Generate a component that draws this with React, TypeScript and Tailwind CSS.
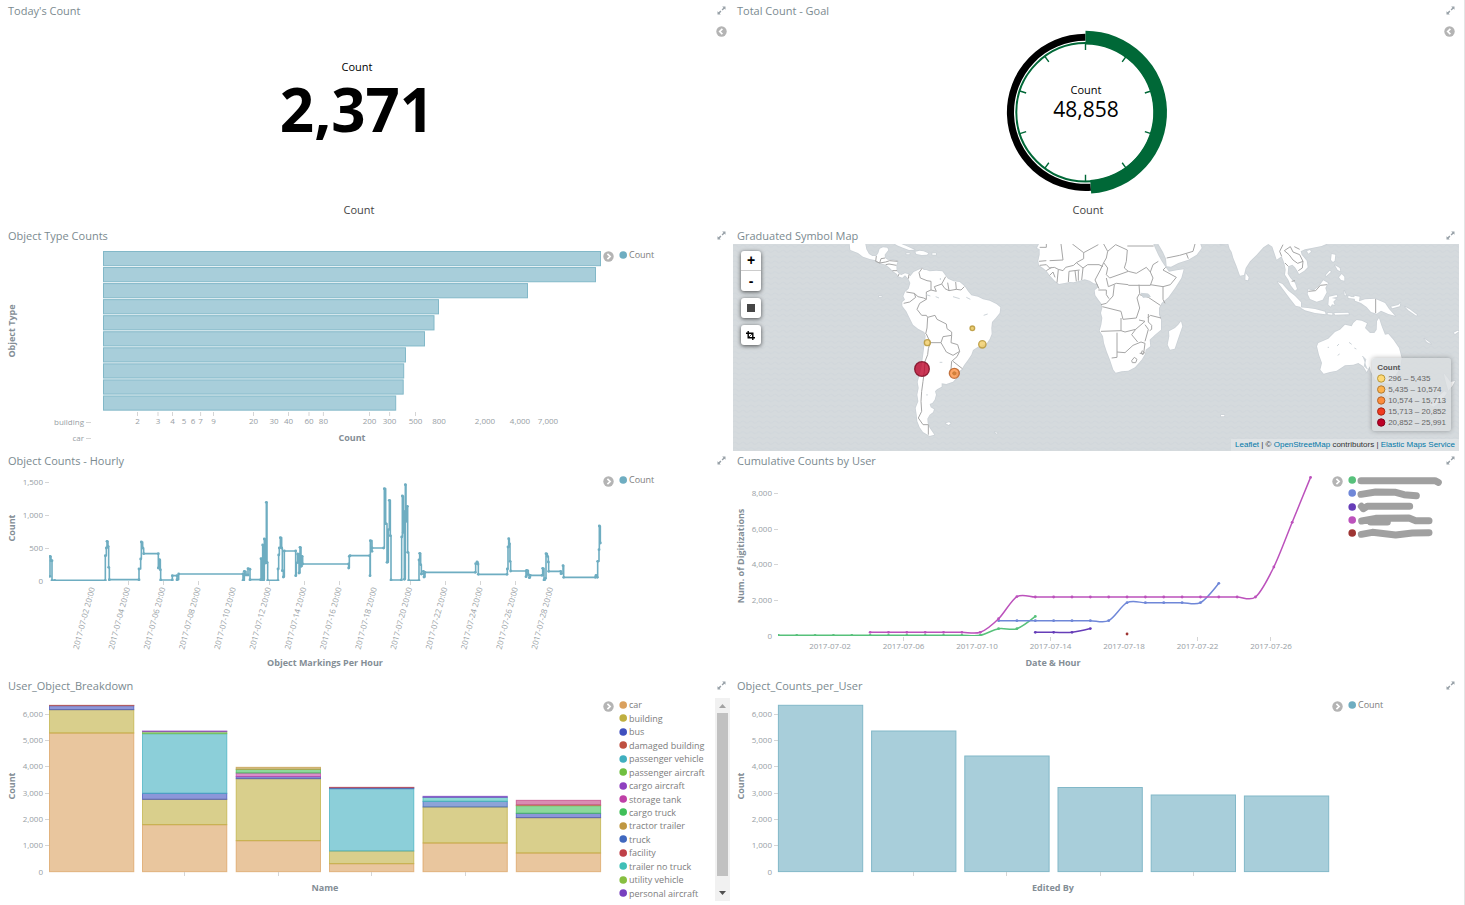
import React from 'react';

type Pt = [number, number];

const BLUE = '#6eadc1';

/* ---------- shared pieces ---------- */

function ExpandIcon() {
  return (
    <svg viewBox="0 0 9 9" className="h-[9px] w-[9px]" aria-hidden="true">
      <path d="M5.2 0.5H8.5V3.8L7.4 2.7L5.6 4.5L4.6 3.5L6.4 1.7ZM0.5 5.2L1.6 6.3L3.4 4.5L4.4 5.5L2.7 7.4L3.8 8.5H0.5Z" fill="#98a1a8" />
    </svg>
  );
}

function ToggleButton({ dir }: { dir: 'left' | 'right' }) {
  return (
    <button type="button" aria-label="Toggle legend" className="mt-[6px] flex h-3 w-[11px] shrink-0 items-center justify-center">
      <svg viewBox="0 0 11 11" className="h-[11px] w-[11px]" aria-hidden="true">
        <circle cx="5.5" cy="5.5" r="5.2" fill="#b4b4b4" />
        <path
          d={dir === 'right' ? 'M4.4 2.8L7.1 5.5L4.4 8.2' : 'M6.4 2.8L3.7 5.5L6.4 8.2'}
          fill="none"
          stroke="#fff"
          strokeWidth="1.7"
        />
      </svg>
    </button>
  );
}

function Panel({ title, children }: { title: string; children: React.ReactNode }) {
  return (
    <section className="flex min-w-0 flex-col">
      <header className="flex h-[15px] items-start justify-between pl-1 pr-1">
        <h2 className="text-[11px] leading-[13px] text-[#7b8a90]">{title}</h2>
        <button type="button" aria-label={'Expand ' + title} className="flex h-[13px] items-center">
          <ExpandIcon />
        </button>
      </header>
      <div className="flex flex-1">{children}</div>
    </section>
  );
}

function Dot({ color }: { color: string }) {
  return (
    <svg viewBox="0 0 8 8" className="h-2 w-2 shrink-0" aria-hidden="true">
      <circle cx="4.2" cy="4" r="3.8" fill={color} />
    </svg>
  );
}

function Legend({ children }: { children: React.ReactNode }) {
  return (
    <div className="flex w-[127px] shrink-0">
      <ToggleButton dir="right" />
      <ul className="ml-[5px] mt-1 min-w-0 flex-1 text-[9px] leading-[13px] text-[#7d7d7d]">{children}</ul>
    </div>
  );
}

function CountLegend() {
  return (
    <Legend>
      <li className="flex items-center gap-[2px]">
        <Dot color={BLUE} />
        Count
      </li>
    </Legend>
  );
}

function Chart({ x, y, label, children }: { x: number; y: number; label: string; children: React.ReactNode }) {
  return (
    <div className="min-w-0 flex-1">
      <svg viewBox={`${x} ${y} 599 207`} className="block h-auto w-full" role="img" aria-label={label}>
        {children}
      </svg>
    </div>
  );
}

function AxisTitle({ x, y, vertical, children }: { x: number; y: number; vertical?: boolean; children: string }) {
  return (
    <text
      x={x}
      y={y}
      textAnchor="middle"
      fill="#848e96"
      className="text-[9px] font-bold"
      transform={vertical ? `rotate(-90 ${x} ${y})` : undefined}
    >
      {children}
    </text>
  );
}

function YTicks({ right, ticks }: { right: number; ticks: [string, number][] }) {
  return (
    <g>
      {ticks.map(([label, y]) => (
        <g key={label}>
          <text x={right - 6} y={Math.floor(y) + 3} textAnchor="end" fill="#979ea4" className="text-[8px]">
            {label}
          </text>
          {label !== '0' && <path d={`M${right - 4} ${y}H${right}`} stroke="#d5d5d5" />}
        </g>
      ))}
    </g>
  );
}

function XMarks({ xs, y }: { xs: number[]; y: number }) {
  return <path d={xs.map((x) => `M${x} ${y}v4`).join('')} stroke="#d5d5d5" fill="none" />;
}

/* ---------- Today's Count ---------- */

function TodayCount() {
  return (
    <>
      <div className="flex flex-1 flex-col items-center pr-[2px]">
        <div className="flex flex-1 flex-col items-center pr-1 pt-10 text-black">
          <div className="text-[11px] leading-4">Count</div>
          <div className="text-[60px] font-bold leading-[68px]">2,371</div>
        </div>
        <div className="pb-2 text-[11px] leading-4 text-[#444]">Count</div>
      </div>
      <div className="w-[14px] shrink-0">
        <ToggleButton dir="left" />
      </div>
    </>
  );
}

/* ---------- Goal gauge ---------- */

const GX = 1085.5;
const GY = 112.3;

function polar(r: number, deg: number): Pt {
  const a = (deg * Math.PI) / 180;
  return [GX + r * Math.sin(a), GY - r * Math.cos(a)];
}

function ring(inner: number, outer: number, from: number, to: number) {
  const big = to - from > 180 ? 1 : 0;
  return `M${polar(outer, from)}A${outer} ${outer} 0 ${big} 1 ${polar(outer, to)}L${polar(inner, to)}A${inner} ${inner} 0 ${big} 0 ${polar(inner, from)}Z`;
}

function Goal() {
  return (
    <>
      <div className="min-w-0 flex-1">
        <svg viewBox="733 19 711 207" className="block h-auto w-full" role="img" aria-label="Total count against goal">
          <path d={ring(71.5, 78.6, 176, 360)} fill="#000" />
          <circle cx={GX} cy={GY} r="69.2" fill="none" stroke="#006837" strokeWidth="2" />
          <path d={ring(67.8, 81.5, 0, 176)} fill="#006837" />
          <path
            d={Array.from({ length: 10 }, (_, i) => `M${polar(69, i * 36)}L${polar(62.4, i * 36)}`).join('')}
            stroke="#006837"
            strokeWidth="1.4"
          />
          <text x="1086" y="94" textAnchor="middle" className="text-[11px]">Count</text>
          <text x="1086" y="117" textAnchor="middle" className="text-[21px]">48,858</text>
          <text x="1088" y="214" textAnchor="middle" fill="#444" className="text-[11px]">Count</text>
        </svg>
      </div>
      <div className="w-[15px] shrink-0">
        <ToggleButton dir="left" />
      </div>
    </>
  );
}

/* ---------- Object Type Counts ---------- */

const typeEnds = [600.5, 595.5, 527.5, 438.5, 434, 424.5, 405.5, 403.7, 403.2, 395.7];
const logLabels: [string, number, boolean][] = [
  ['2', 137.5, true], ['3', 158, true], ['4', 172.5, true], ['5', 184, false], ['6', 193, false],
  ['7', 200.6, true], ['9', 213.5, true], ['20', 253.5, true], ['30', 274, false], ['40', 288.5, true],
  ['60', 309, true], ['80', 323.4, true], ['200', 369.5, true], ['300', 389.6, true], ['500', 415.5, true],
  ['800', 439, false], ['2,000', 485, false], ['4,000', 520, false], ['7,000', 548, false],
];

function ObjectTypes() {
  return (
    <>
      <Chart x={4} y={244} label="Object type counts">
        {typeEnds.map((end, i) => (
          <rect
            key={i}
            x="103.5"
            y={251.5 + i * 16.05}
            width={end - 103.5}
            height="14.2"
            fill={BLUE}
            fillOpacity="0.6"
            stroke="#82b8c8"
          />
        ))}
        {logLabels.map(([t, x]) => (
          <text key={t} x={x} y="424" textAnchor="middle" fill="#979ea4" className="text-[8px]">{t}</text>
        ))}
        <XMarks xs={logLabels.filter((l) => l[2]).map((l) => l[1])} y={412} />
        <text x="84" y="425" textAnchor="end" fill="#979ea4" className="text-[8px]">building</text>
        <text x="84" y="441" textAnchor="end" fill="#979ea4" className="text-[8px]">car</text>
        <path d="M86 422.5H91M86 438.5H91" stroke="#d5d5d5" />
        <AxisTitle x={15} y={331} vertical>Object Type</AxisTitle>
        <AxisTitle x={352} y={441}>Count</AxisTitle>
      </Chart>
      <CountLegend />
    </>
  );
}

/* ---------- Map ---------- */

const land = [
  'M350 48L352 66L375 75L390 86L410 93L428 97L440 105L458 110L468 118L480 130L492 138L495 145L508 149L516 142L526 152L532 146L528 139L516 136L505 141L498 138L491 128L490 112L494 100L480 96L464 95L456 90L455 80L466 66L463 59L450 58L440 62L436 75L430 84L418 84L408 78L400 64L397 48Z',
  'M486 48L505 48L520 54L538 62L545 65L528 66L510 59L492 52Z',
  'M547 71L560 68L572 70L586 76L582 80L566 81L550 78Z',
  'M598 76h11v4h-11ZM520 76h10v3h-10Z',
  'M526 152L533 143L542 132L555 126L568 120L572 126L580 126L590 130L610 128L628 130L634 138L645 152L662 160L680 162L695 175L705 190L715 202L735 206L750 214L770 218L790 228L802 238L800 255L788 270L777 282L775 300L776 318L770 333L762 345L750 352L735 356L720 366L715 380L705 395L694 410L686 424L676 432L664 432L672 448L660 461L640 468L626 466L626 476L612 484L606 490L609 500L605 515L598 525L590 528L593 538L603 544L600 553L590 560L583 572L584 585L590 600L604 620L590 624L570 612L560 598L553 580L551 560L548 540L556 520L553 500L557 480L554 462L560 440L565 420L568 400L572 370L575 345L578 325L574 312L555 302L540 290L530 270L520 250L508 234L508 222L516 215L511 205L516 192L527 182L532 165Z',
  'M638 586l10 -3l5 3l-6 5ZM785 612l9 3l-3 2Z',
  'M918 48L912 60L920 64L920 80L916 98L918 112L930 120L940 128L950 142L965 158L978 168L995 165L1010 162L1022 163L1040 158L1055 154L1070 158L1082 166L1094 168L1096 178L1085 187L1087 202L1097 216L1106 228L1108 240L1104 255L1108 270L1105 290L1100 308L1110 325L1113 345L1121 370L1131 395L1141 425L1148 434L1166 430L1186 428L1206 418L1226 395L1236 378L1238 365L1252 355L1250 335L1266 320L1284 305L1284 275L1278 260L1278 240L1286 225L1306 208L1326 180L1345 150L1352 124L1331 127L1308 131L1298 118L1286 100L1276 82L1266 60L1261 48Z',
  'M1276 48L1290 72L1299 92L1301 115L1314 116L1336 105L1366 95L1391 80L1406 60L1402 48Z',
  'M1344 280L1348 295L1341 315L1334 335L1325 362L1311 365L1304 350L1309 325L1308 310L1326 300L1336 290Z',
  'M1462 50L1486 48L1490 62L1496 72L1501 90L1511 115L1521 143L1533 141L1538 120L1551 100L1571 80L1591 58L1606 48H1480Z',
  'M1538 136L1547 148L1545 157L1537 155Z',
  'M1606 48L1618 56L1631 95L1646 85L1654 105L1658 125L1656 140L1666 155L1673 172L1686 188L1692 183L1686 165L1672 150L1664 137L1666 115L1678 110L1686 118L1694 130L1698 138L1714 128L1724 118L1721 98L1706 80L1703 70L1716 64L1736 60L1766 54L1780 48Z',
  'M1722 69l9 -3l3 5l-8 6Z',
  'M1634 162L1648 168L1666 188L1686 204L1704 223L1704 237L1688 233L1668 208L1652 186Z',
  'M1701 238L1724 240L1746 243L1776 251L1778 259L1746 255L1716 247ZM1784 255l14 1v4l-14 -1ZM1804 255l42 -1l2 5l-42 1Z',
  'M1726 184L1741 188L1758 175L1771 157L1785 165L1777 180L1781 193L1769 215L1751 221L1731 213L1724 198Z',
  'M1788 206L1811 201L1813 206L1796 210L1809 213L1801 221L1805 231L1797 229L1793 236L1786 230Z',
  'M1796 78L1807 80L1805 98L1800 102L1794 96ZM1806 112l14 8l2 10l-8 -4ZM1818 148l8 -10l8 8v12l-10 -2ZM1790 128l-12 14l2 2l14 -13ZM1846 203l10 4l14 1l-6 4l-18 -2ZM1834 188l5 14h-4Z',
  'M1864 203L1880 206L1878 220L1896 214L1926 212L1956 225L1968 243L1986 263L1966 258L1944 248L1931 257L1914 252L1901 237L1884 225L1866 218ZM1974 236l22 -5l6 -6l-2 10l-22 6ZM2016 236l14 8l22 16l-2 3l-24 -16ZM2074 332l14 10l6 6l-12 -6ZM2162 314l12 -6l4 2l-12 8Z',
  'M1756 345L1752 355L1758 380L1767 405L1762 425L1772 437L1791 432L1811 428L1836 412L1861 410L1876 405L1891 415L1901 432L1910 415L1913 430L1926 455L1946 464L1971 468L1986 445L2001 420L2006 390L1998 360L1981 335L1966 318L1956 320L1946 295L1938 270L1932 280L1931 305L1924 315L1911 315L1896 300L1902 286L1886 278L1871 276L1861 285L1856 295L1836 290L1821 305L1806 312L1786 332Z',
  'M1956 485L1971 488L1966 506L1958 502Z',
  'M2132 436L2142 448L2152 462L2166 459L2158 474L2146 488L2140 468ZM2134 490L2142 494L2124 520L2102 536L2090 530L2114 508Z',
  'M1464 561h10v4h-10ZM438 204h8v2h-8Z',
];

const borders = [
  'M430 84L428 100L440 105L444 92L456 90M440 105L458 102L470 98L494 100M458 110L468 108L490 112M478 128H492M495 145L498 138M528 139L526 152',
  'M568 120L558 134L562 150L582 158L594 160L594 186L580 192L580 214L572 210L555 206L544 196L520 192M512 226L530 222L548 208L544 196M580 214L560 226L552 244L566 262L580 262L584 268L582 300L578 318M584 268L606 262L612 274L640 288L642 302L656 312L656 322L630 326L624 344L592 344L580 318M592 344L586 362L584 380L576 400L574 430L570 460L566 490L564 520L566 550L556 570L570 590L586 590V620M594 186L610 190L604 176L626 168L638 146M626 168L636 182L648 188L644 164M648 188L670 184L668 162M670 184L684 186L694 176M656 322L654 344L674 350L680 370L660 382L640 372L624 344M680 370L672 386L656 400L654 424M660 400L688 422',
  'M920 58H940V48M984 48L990 96L950 98M940 98L918 100M1018 48L1052 74L1096 50M1052 74V92L1030 104L1022 112L998 118L990 128L976 124L964 118L950 120L940 110L920 112M1030 104L1050 120L1064 110H1098L1110 116M976 124L972 164M1008 130L1006 162M1026 128L1030 160M1036 128V158M1050 120L1046 156M950 142L960 132L966 148M1008 130L1040 126M940 128L956 118',
  'M1112 48L1124 70L1120 90L1112 104L1102 126L1086 156M1124 70L1148 50L1183 66L1180 100L1174 120L1186 130L1130 150L1120 140L1124 120L1112 104M1120 150L1126 176L1150 166L1186 170M1183 54H1262M1186 130L1210 136L1240 118L1252 132L1260 150L1252 172H1186M1276 100L1260 110L1252 132M1298 118L1290 126L1330 148L1312 170L1290 176L1252 170M1290 176V214L1296 226M1218 170L1220 196L1212 210L1220 240L1210 270L1170 274L1164 250L1140 244L1108 236M1220 200L1246 208L1282 232M1144 170L1140 204L1120 226L1104 230M1096 186H1120V200L1128 212M1086 156L1098 182M1164 270V308L1104 310M1164 308L1176 312L1208 304L1236 280L1218 276M1244 270L1252 262L1284 270M1152 314V388L1136 390M1152 372L1176 374L1200 352L1224 342L1236 346L1232 376L1220 376M1208 304L1196 320L1214 342M1236 290L1246 304L1236 340M1196 398l8 -10l8 6l-4 10h-10ZM1228 368l6 6l-4 6l-6 -4ZM1246 258v24l10 10v12l-6 4',
  'M1301 90L1340 82L1360 76L1380 70L1386 48M1360 76L1366 92M1646 85L1640 70L1650 50M1654 68L1672 56L1680 72L1700 80L1710 100L1694 106L1680 96L1668 80L1654 68M1666 115L1656 105M1710 100L1708 120L1696 128M1700 64L1684 56M1676 160L1686 158M1726 190L1748 188L1762 172L1782 170M1928 213V255',
];

const markers = [
  { x: 567, y: 423, r: 22, fill: '#bd0026', stroke: '#7f0d24' },
  { x: 664, y: 436, r: 15, fill: '#fd8d3c', stroke: '#b9622a' },
  { x: 583, y: 344, r: 9, fill: '#f0cb62', stroke: '#b9983a' },
  { x: 748, y: 349, r: 11, fill: '#f0cb62', stroke: '#b9983a' },
  { x: 718, y: 301, r: 7, fill: '#e5c050', stroke: '#b9983a' },
];

const ranges = [
  ['296 – 5,435', '#fed976', '#b9983a'],
  ['5,435 – 10,574', '#feb24c', '#b27d35'],
  ['10,574 – 15,713', '#fd8d3c', '#b1632a'],
  ['15,713 – 20,852', '#f03b20', '#a82916'],
  ['20,852 – 25,991', '#bd0026', '#84001b'],
];

function SymbolMap() {
  return (
    <div className="relative flex-1 overflow-hidden bg-[#d5dadd] font-['Liberation_Sans',sans-serif]">
      <svg viewBox="0 48 2178 621" className="block h-auto w-full" role="img" aria-label="World map with graduated symbols">
        <defs>
          <pattern id="waves" width="24" height="16" patternUnits="userSpaceOnUse">
            <path d="M0 6Q6 0 12 6T24 6" fill="none" stroke="#cdd4d9" strokeWidth="3" opacity="0.45" />
          </pattern>
        </defs>
        <rect x="0" y="48" width="2178" height="621" fill="url(#waves)" />
        <path d={land.join('')} fill="#fff" stroke="#cbd1d6" strokeWidth="5" strokeLinejoin="round" />
        <path d={land.join('')} fill="#fff" />
        <path d={borders.join('')} fill="none" stroke="#a6a6a6" strokeWidth="3" strokeLinejoin="round" />
        <path
          d="M1224 196l22 2l6 8l-22 2ZM580 200l12 4M608 206l10 4M660 206l20 6M700 208l12 6M752 262l12 -4M620 403h8M622 150v6M582 498v5M1812 354l6 -6M1848 343l8 6M1814 382l6 -4M1784 358h4M1888 384l10 10l-4 20l10 10M1864 360l6 3"
          fill="#cdd4d9"
          stroke="#cdd4d9"
          strokeWidth="3"
        />
        {markers.map((m) => (
          <circle key={m.x} cx={m.x} cy={m.y} r={m.r} fill={m.fill} fillOpacity="0.78" stroke={m.stroke} strokeWidth="4" strokeOpacity="0.85" />
        ))}
        <circle cx="664" cy="436" r="5" fill="#d98036" stroke="#b9773a" strokeWidth="2" />
      </svg>

      <div className="absolute left-2 top-[7px] flex flex-col gap-[7px] text-black">
        <div className="flex flex-col overflow-hidden rounded-[3px] bg-white shadow-[0_1px_4px_rgba(0,0,0,0.65)]">
          <button type="button" aria-label="Zoom in" className="flex h-5 w-5 items-center justify-center border-b border-[#ccc] pb-px text-sm font-bold leading-none">+</button>
          <button type="button" aria-label="Zoom out" className="flex h-5 w-5 items-center justify-center pb-px text-sm font-bold leading-none">-</button>
        </div>
        <button type="button" aria-label="Draw rectangle" className="flex h-5 w-5 items-center justify-center rounded-[3px] bg-white shadow-[0_1px_4px_rgba(0,0,0,0.65)]">
          <svg viewBox="0 0 8 8" className="h-2 w-2" aria-hidden="true"><rect width="8" height="8" fill="#464646" /></svg>
        </button>
        <button type="button" aria-label="Fit data bounds" className="flex h-5 w-5 items-center justify-center rounded-[3px] bg-white pr-px shadow-[0_1px_4px_rgba(0,0,0,0.65)]">
          <svg viewBox="0 0 9 9" className="h-[9px] w-[9px]" aria-hidden="true">
            <path d="M2.2 0V6.7H9M0 2.2H6.8V9" fill="none" stroke="#000" strokeWidth="1.4" />
            <path d="M3 6L6.4 2.6" stroke="#000" strokeWidth="0.7" />
          </svg>
        </button>
      </div>

      <div className="absolute bottom-5 right-2 rounded-[3px] bg-[#dadde0]/80 px-[5px] pb-[3px] pt-1 text-[8px] leading-[11px] text-[#666] shadow-[0_0_5px_rgba(0,0,0,0.3)]">
        <div className="font-bold text-[#555]">Count</div>
        <ul>
          {ranges.map(([label, fill, stroke]) => (
            <li key={label} className="flex items-center gap-[2px] whitespace-nowrap">
              <svg viewBox="0 0 9 9" className="h-[9px] w-[9px] shrink-0" aria-hidden="true">
                <circle cx="4.2" cy="4.5" r="3.7" fill={fill} stroke={stroke} />
              </svg>
              {label}
            </li>
          ))}
        </ul>
      </div>

      <div className="absolute bottom-0 right-0 bg-white/25 px-1 text-[8px] leading-[12px] text-[#333]">
        <a href="#leaflet" className="text-[#0078a8]">Leaflet</a> | © <a href="#osm" className="text-[#0078a8]">OpenStreetMap</a> contributors |{' '}
        <a href="#ems" className="text-[#0078a8]">Elastic Maps Service</a>
      </div>
    </div>
  );
}

/* ---------- Object Counts - Hourly ---------- */

/* Samples on a grid three times finer than the drawing unit. */
const hourly: Pt[] = [
  [150, 370], [150, 310], [153, 323], [156, 323], [156, 382], [164, 382], [316, 382], [316, 308], [319, 285], [321, 265], [324, 280],
  [326, 343], [328, 380], [417, 380], [417, 348], [422, 318], [424, 267], [428, 285], [431, 302], [475, 302], [475, 345],
  [478, 320], [481, 350], [482, 381], [517, 381], [517, 368], [531, 368], [531, 380], [536, 363], [729, 363], [729, 382],
  [733, 355], [738, 366], [744, 366], [744, 347], [750, 349], [750, 380], [782, 380], [783, 317], [787, 380], [788, 276],
  [791, 380], [793, 258], [797, 330], [799, 148], [801, 328], [803, 382], [834, 382], [834, 348], [836, 306], [838, 285], [841, 254],
  [845, 285], [847, 353], [850, 372], [853, 294], [887, 294], [887, 368], [889, 330], [893, 303], [897, 360], [900, 283],
  [903, 340], [906, 310], [908, 333], [1046, 333], [1046, 345], [1048, 310], [1050, 308], [1109, 308], [1110, 368], [1111, 263],
  [1116, 295], [1116, 285], [1151, 285], [1153, 107], [1157, 212], [1161, 328], [1165, 230], [1168, 142], [1171, 248],
  [1173, 381], [1204, 381], [1205, 252], [1207, 129], [1210, 238], [1211, 175], [1213, 379], [1216, 95], [1218, 205],
  [1222, 160], [1223, 298], [1226, 382], [1257, 382], [1257, 321], [1259, 301], [1262, 335], [1264, 363], [1270, 355],
  [1272, 372], [1275, 358], [1426, 358], [1427, 332], [1431, 327], [1434, 333], [1435, 364], [1521, 364], [1522, 348],
  [1524, 282], [1526, 257], [1528, 272], [1530, 325], [1532, 354], [1579, 354], [1578, 371], [1580, 352], [1585, 365],
  [1588, 374], [1591, 367], [1626, 367], [1628, 346], [1632, 381], [1636, 376], [1638, 302], [1642, 310], [1645, 327],
  [1646, 355], [1682, 355], [1683, 362], [1689, 338], [1691, 373], [1786, 373], [1788, 367], [1792, 373], [1793, 325],
  [1797, 290], [1798, 219], [1801, 270],
].map(([x, y]) => [x / 3, 453 + y / 3] as Pt);

/* Each value holds until the next sample, then jumps. */
const hourlyPath = hourly.map(([x, y], i) => (i === 0 ? `M${x} ${y}` : `H${x}V${y}`)).join('');

const hourDays = ['02', '04', '06', '08', '10', '12', '14', '16', '18', '20', '22', '24', '26', '28'];

function Hourly() {
  return (
    <>
      <Chart x={4} y={469} label="Object counts per hour">
        <clipPath id="hourly-plot">
          <rect x="49" y="470" width="553" height="111" />
        </clipPath>
        <YTicks right={49} ticks={[['1,500', 482.5], ['1,000', 515.5], ['500', 548.5], ['0', 581.5]]} />
        <XMarks xs={[128.5, 163.5, 198.5, 269.5, 304.5, 339.5, 410.5, 445.5, 480.5, 515.5]} y={581} />
        <g clipPath="url(#hourly-plot)">
          <path d={hourlyPath} fill="none" stroke={BLUE} strokeWidth="1.6" strokeLinejoin="round" />
          {hourly.map(([x, y], i) => (
            <circle key={i} cx={x} cy={y} r="1.4" fill={BLUE} />
          ))}
        </g>
        {hourDays.map((d, i) => {
          const x = 95 + i * 35.25;
          return (
            <text key={d} x={x} y="588" textAnchor="end" fill="#979ea4" className="text-[8px]" transform={`rotate(-75 ${x} 588)`}>
              {`2017-07-${d} 20:00`}
            </text>
          );
        })}
        <AxisTitle x={15} y={528} vertical>Count</AxisTitle>
        <AxisTitle x={325} y={666}>Object Markings Per Hour</AxisTitle>
      </Chart>
      <CountLegend />
    </>
  );
}

/* ---------- Cumulative Counts by User ---------- */

const day = (i: number) => 778.4 + i * 18.35;
const flat = (from: number, to: number, y: number): Pt[] =>
  Array.from({ length: to - from + 1 }, (_, k) => [day(from + k), y] as Pt);

const users: { color: string; pts: Pt[]; scribble: string }[] = [
  {
    color: '#57c17b',
    pts: [...flat(0, 11, 635.3), [day(12), 628.7], [day(13), 628.7], [day(14), 616.4]],
    scribble: 'M12 23H234L244 28',
  },
  {
    color: '#6f87d8',
    pts: [...flat(12, 18, 620.7), ...flat(19, 23, 602.7), [day(24), 583.3]],
    scribble: 'M12 22L56 15L116 16L141 23L178 26',
  },
  { color: '#663db8', pts: [...flat(14, 16, 632.3), [day(17), 628.6]], scribble: 'M13 19L19 26L31 19H158' },
  {
    color: '#bc52bc',
    pts: [...flat(5, 11, 632.3), [day(12), 618.7], [day(13), 596.6], ...flat(14, 26, 597), [day(27), 567], [day(28), 522.3], [day(29), 477.4]],
    scribble: 'M14 24L56 16L156 15L176 23H216M41 27H91',
  },
  { color: '#9e3533', pts: [[day(19), 634]], scribble: 'M13 22L46 16L116 24L166 18L216 17' },
];

/* Cardinal spline with a tension of 0.7. */
function spline(pts: Pt[]) {
  const tangent = (i: number): Pt =>
    i === 0 || i === pts.length - 1
      ? [0, 0]
      : [0.15 * (pts[i + 1][0] - pts[i - 1][0]), 0.15 * (pts[i + 1][1] - pts[i - 1][1])];
  let d = `M${pts[0]}`;
  for (let i = 1; i < pts.length; i++) {
    const a = tangent(i - 1);
    const b = tangent(i);
    d += `C${pts[i - 1][0] + a[0]} ${pts[i - 1][1] + a[1]} ${pts[i][0] - b[0]} ${pts[i][1] - b[1]} ${pts[i]}`;
  }
  return d;
}

function Cumulative() {
  return (
    <>
      <Chart x={733} y={469} label="Cumulative counts by user">
        <clipPath id="cumulative-plot">
          <rect x="778" y="470" width="554" height="166" />
        </clipPath>
        <YTicks right={778} ticks={[['8,000', 493.5], ['6,000', 529.5], ['4,000', 564.5], ['2,000', 600.5], ['0', 636.5]]} />
        <XMarks xs={[903.5, 1050.5, 1197.5, 1270.5]} y={637} />
        {['02', '06', '10', '14', '18', '22', '26'].map((d, i) => (
          <text key={d} x={830 + i * 73.5} y="649" textAnchor="middle" fill="#979ea4" className="text-[8px]">
            {`2017-07-${d}`}
          </text>
        ))}
        <g clipPath="url(#cumulative-plot)">
          {users.map((u) => (
            <g key={u.color}>
              <path d={spline(u.pts)} fill="none" stroke={u.color} strokeWidth="1.5" />
              {u.pts.map(([x, y]) => (
                <circle key={x} cx={x} cy={y} r="1.4" fill={u.color} />
              ))}
            </g>
          ))}
        </g>
        <AxisTitle x={744} y={556} vertical>Num. of Digitizations</AxisTitle>
        <AxisTitle x={1053} y={666}>Date &amp; Hour</AxisTitle>
      </Chart>
      <Legend>
        <div className="flex h-[67px] flex-col">
          {users.map((u) => (
            <li key={u.color} className="flex flex-1 items-center gap-px">
              <Dot color={u.color} />
              <svg viewBox="0 0 264 39" className="h-[13px] w-[88px]" aria-hidden="true">
                <path d={u.scribble} fill="none" stroke="#a0a0a0" strokeWidth="21" strokeLinecap="round" strokeLinejoin="round" />
              </svg>
            </li>
          ))}
        </div>
      </Legend>
    </>
  );
}

/* ---------- User_Object_Breakdown ---------- */

const kinds: [string, string][] = [
  ['car', '#daa05d'],
  ['building', '#bfaf40'],
  ['bus', '#4050bf'],
  ['damaged building', '#bf5040'],
  ['passenger vehicle', '#40afbf'],
  ['passenger aircraft', '#70bf40'],
  ['cargo aircraft', '#8f40bf'],
  ['storage tank', '#bf40a7'],
  ['cargo truck', '#40bf58'],
  ['tractor trailer', '#bf9740'],
  ['truck', '#4068bf'],
  ['facility', '#bf4048'],
  ['trailer no truck', '#40bfb7'],
  ['utility vehicle', '#87bf40'],
  ['personal aircraft', '#7840bf'],
];

/* Each segment: fill colour and the height of its upper edge, on the same fine grid. */
const stacks: { x: number; parts: [string, number][] }[] = [
  { x: 49.5, parts: [['#daa05d', 165], ['#bfaf40', 95], ['#4050bf', 83], ['#bf5040', 82]] },
  { x: 142.5, parts: [['#daa05d', 440], ['#bfaf40', 364], ['#4050bf', 346], ['#40afbf', 167], ['#70bf40', 161], ['#8f40bf', 159]] },
  { x: 236.2, parts: [['#daa05d', 488], ['#bfaf40', 302], ['#4050bf', 296], ['#bf40a7', 285], ['#40bf58', 274], ['#bf9740', 268]] },
  { x: 329.5, parts: [['#daa05d', 557], ['#bfaf40', 519], ['#40afbf', 332], ['#4068bf', 329], ['#bf4048', 328]] },
  { x: 423, parts: [['#daa05d', 495], ['#bfaf40', 387], ['#4068bf', 370], ['#40bfb7', 358], ['#7840bf', 355]] },
  { x: 516.3, parts: [['#daa05d', 525], ['#bfaf40', 419], ['#4050bf', 406], ['#40bf58', 383], ['#bf9740', 381], ['#bf407f', 367]] },
];

const countTicks: [string, number][] = [
  ['6,000', 714.5], ['5,000', 740.5], ['4,000', 766.5], ['3,000', 793.5], ['2,000', 819.5], ['1,000', 845.5], ['0', 872.5],
];

function Breakdown() {
  return (
    <>
      <Chart x={4} y={694} label="Objects by user, stacked by type">
        <YTicks right={49} ticks={countTicks} />
        {stacks.map((s) => {
          let base = 581;
          return s.parts.map(([color, top], i) => {
            const h = (base - top) / 3;
            base = top;
            return (
              <rect
                key={s.x + '-' + i}
                x={s.x}
                y={678 + top / 3}
                width="84.3"
                height={h}
                fill={color}
                fillOpacity="0.6"
                stroke={color}
                strokeOpacity="0.7"
              />
            );
          });
        })}
        <XMarks xs={[184.5, 278.5, 371.5, 465.5]} y={872} />
        <AxisTitle x={15} y={786} vertical>Count</AxisTitle>
        <AxisTitle x={325} y={891}>Name</AxisTitle>
      </Chart>
      <div className="flex w-[127px] shrink-0">
        <ToggleButton dir="right" />
        <ul className="ml-[5px] mt-1 flex h-[202px] min-w-0 flex-1 flex-col whitespace-nowrap text-[9px] leading-[13px] text-[#7d7d7d]">
          {kinds.map(([name, color]) => (
            <li key={name} className="flex flex-1 items-center gap-[2px]">
              <Dot color={color} />
              {name}
            </li>
          ))}
        </ul>
        <div className="mt-1 flex w-[15px] flex-col items-center bg-[#f1f1f1]" aria-hidden="true">
          <svg viewBox="0 0 15 15" className="h-[15px] w-[15px]"><path d="M4 10L7.5 6L11 10Z" fill="#a3a3a3" /></svg>
          <div className="w-[11px] flex-1 bg-[#c1c1c1]" />
          <div className="h-[10px]" />
          <svg viewBox="0 0 15 15" className="h-[15px] w-[15px]"><path d="M4 5L7.5 9L11 5Z" fill="#505050" /></svg>
        </div>
      </div>
    </>
  );
}

/* ---------- Object_Counts_per_User ---------- */

const perUser = [705.3, 731, 756, 787.5, 795, 796];

function PerUser() {
  return (
    <>
      <Chart x={733} y={694} label="Object counts per user">
        <YTicks right={778} ticks={countTicks} />
        {perUser.map((top, i) => (
          <rect
            key={i}
            x={778.4 + i * 93.2}
            y={top}
            width="84.3"
            height={871.6 - top}
            fill={BLUE}
            fillOpacity="0.6"
            stroke="#82b8c8"
          />
        ))}
        <XMarks xs={[913.5, 1006.5, 1100.5, 1193.5]} y={872} />
        <AxisTitle x={744} y={786} vertical>Count</AxisTitle>
        <AxisTitle x={1053} y={891}>Edited By</AxisTitle>
      </Chart>
      <CountLegend />
    </>
  );
}

export default function App() {
  return (
    <main className="min-h-screen border-r border-[#e4e4e4] bg-white pl-1 pr-[5px] pt-1 font-['Open_Sans',sans-serif]">
      <div className="grid grid-cols-2 gap-[3px]">
        <Panel title="Today's Count"><TodayCount /></Panel>
        <Panel title="Total Count - Goal"><Goal /></Panel>
        <Panel title="Object Type Counts"><ObjectTypes /></Panel>
        <Panel title="Graduated Symbol Map"><SymbolMap /></Panel>
        <Panel title="Object Counts - Hourly"><Hourly /></Panel>
        <Panel title="Cumulative Counts by User"><Cumulative /></Panel>
        <Panel title="User_Object_Breakdown"><Breakdown /></Panel>
        <Panel title="Object_Counts_per_User"><PerUser /></Panel>
      </div>
    </main>
  );
}
